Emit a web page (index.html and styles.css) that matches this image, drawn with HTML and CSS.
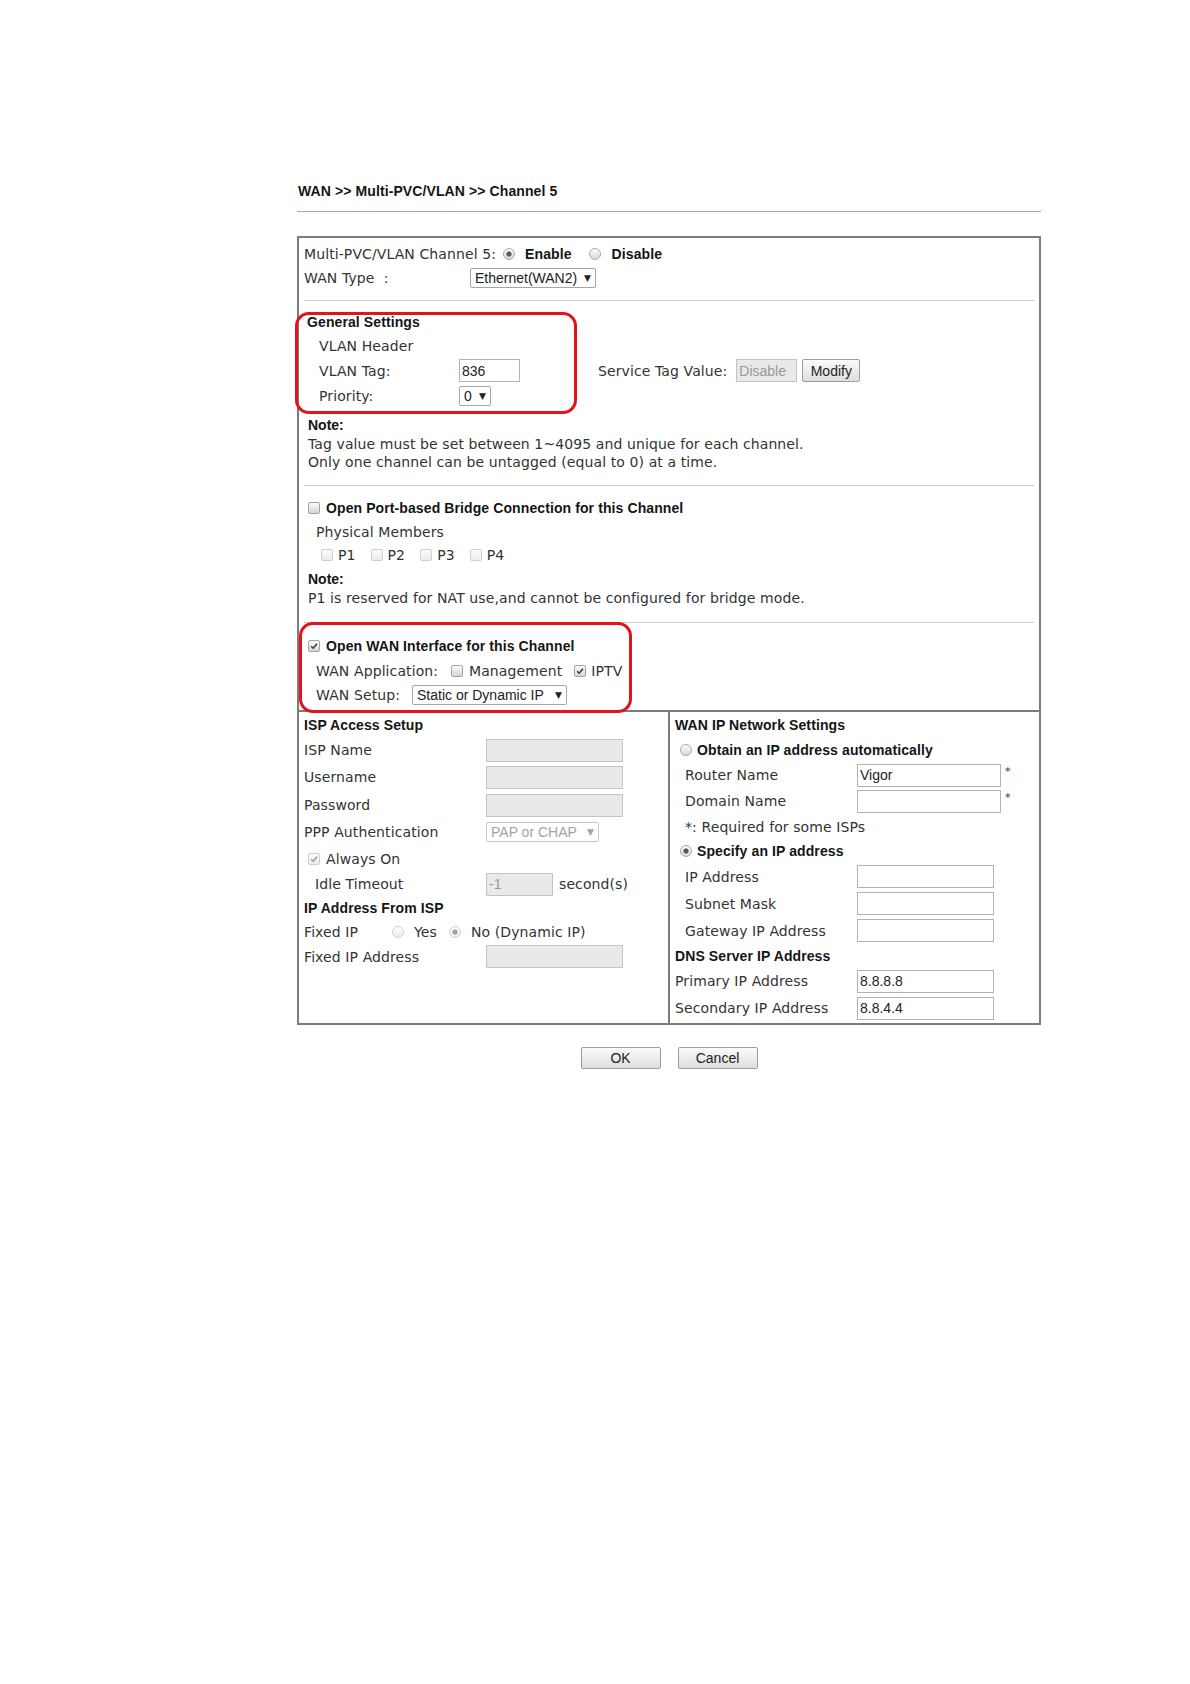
FILE: index.html
```html
<!DOCTYPE html>
<html lang="en">
<head>
<meta charset="utf-8">
<title>WAN &gt;&gt; Multi-PVC/VLAN &gt;&gt; Channel 5</title>
<link rel="stylesheet" href="styles.css">
</head>
<body>
<div class="page">
  <div class="crumb">WAN &gt;&gt; Multi-PVC/VLAN &gt;&gt; Channel 5</div>
  <div class="rule"></div>

  <div class="panel">
    <!-- channel / wan type -->
    <div class="sec sec-top">
      <div class="row h24">
        <span class="lbl">Multi-PVC/VLAN Channel 5:</span>
        <span class="radio on en-radio"></span><b class="opt en-text">Enable</b>
        <span class="radio dis-radio"></span><b class="opt dis-text">Disable</b>
      </div>
      <div class="row h24">
        <span class="lbl w-type">WAN Type&nbsp;&nbsp;:</span>
        <span class="select sel-eth"><span class="sel-text">Ethernet(WAN2)</span><span class="caret">&#9660;</span></span>
      </div>
    </div>

    <!-- general settings -->
    <div class="sec sec-general">
      <div class="gs-block">
        <div class="row h24 head gs-head">General Settings</div>
        <div class="row h24 ind15">VLAN Header</div>
        <div class="row h25 ind15">
          <span class="lbl w140">VLAN Tag:</span>
          <span class="input w61">836</span>
          <span class="lbl svc-lbl">Service Tag Value:</span>
          <span class="input disabled w61 svc-input">Disable</span>
          <span class="btn btn-modify">Modify</span>
        </div>
        <div class="row h26 ind15">
          <span class="lbl w140">Priority:</span>
          <span class="select sel-prio"><span class="sel-text">0</span><span class="caret">&#9660;</span></span>
        </div>
        <div class="mark mark-general"></div>
      </div>
      <div class="note note-general">
        <div class="note-title">Note:</div>
        <div class="note-line">Tag value must be set between 1~4095 and unique for each channel.</div>
        <div class="note-line">Only one channel can be untagged (equal to 0) at a time.</div>
      </div>
    </div>

    <!-- bridge -->
    <div class="sec sec-bridge">
      <div class="row h24 ind4">
        <span class="cb"></span><b class="head cb-text">Open Port-based Bridge Connection for this Channel</b>
      </div>
      <div class="row h23 ind12">Physical Members</div>
      <div class="row h23 ind17 ports">
        <span class="cb faint"></span><span class="port">P1</span>
        <span class="cb faint"></span><span class="port">P2</span>
        <span class="cb faint"></span><span class="port">P3</span>
        <span class="cb faint"></span><span class="port">P4</span>
      </div>
      <div class="note note-bridge">
        <div class="note-title">Note:</div>
        <div class="note-line">P1 is reserved for NAT use,and cannot be configured for bridge mode.</div>
      </div>
    </div>

    <!-- wan interface -->
    <div class="sec sec-wan">
      <div class="row h24 ind4">
        <span class="cb on"><svg viewBox="0 0 12 12"><path d="M2.6 6.3 L5 8.6 L9.6 3.2"/></svg></span><b class="head cb-text">Open WAN Interface for this Channel</b>
      </div>
      <div class="row h25 ind12">
        <span class="lbl w135">WAN Application:</span>
        <span class="cb"></span><span class="mgmt-text">Management</span>
        <span class="cb on iptv-cb"><svg viewBox="0 0 12 12"><path d="M2.6 6.3 L5 8.6 L9.6 3.2"/></svg></span><span class="iptv-text">IPTV</span>
      </div>
      <div class="row h23 ind12">
        <span class="lbl w96">WAN Setup:</span>
        <span class="select sel-setup"><span class="sel-text">Static or Dynamic IP</span><span class="caret">&#9660;</span></span>
      </div>
      <div class="mark mark-wan"></div>
    </div>

    <!-- two columns -->
    <div class="split">
      <div class="col col-left">
        <div class="row h24 head">ISP Access Setup</div>
        <div class="row h26"><span class="lbl w182">ISP Name</span><span class="input disabled w137"></span></div>
        <div class="row h28"><span class="lbl w182">Username</span><span class="input disabled w137"></span></div>
        <div class="row h28"><span class="lbl w182">Password</span><span class="input disabled w137"></span></div>
        <div class="row h26"><span class="lbl w182">PPP Authentication</span><span class="select disabled sel-ppp"><span class="sel-text">PAP or CHAP</span><span class="caret">&#9660;</span></span></div>
        <div class="row h27 ind4"><span class="cb on faint"><svg viewBox="0 0 12 12"><path d="M2.6 6.3 L5 8.6 L9.6 3.2"/></svg></span><span class="cb-text">Always On</span></div>
        <div class="row h24 ind11"><span class="lbl w171">Idle Timeout</span><span class="input disabled w67">-1</span><span class="unit">second(s)</span></div>
        <div class="row h23 head">IP Address From ISP</div>
        <div class="row h25">
          <span class="lbl w88">Fixed IP</span>
          <span class="radio faint"></span><span class="yes-text">Yes</span>
          <span class="radio on faint no-radio"></span><span class="no-text">No (Dynamic IP)</span>
        </div>
        <div class="row h25"><span class="lbl w182">Fixed IP Address</span><span class="input disabled w137"></span></div>
      </div>

      <div class="col col-right">
        <div class="row h24 head">WAN IP Network Settings</div>
        <div class="row h25 ind5"><span class="radio"></span><b class="head rad-text">Obtain an IP address automatically</b></div>
        <div class="row h26 ind10"><span class="lbl w172">Router Name</span><span class="input w144">Vigor</span><span class="star">*</span></div>
        <div class="row h26 ind10"><span class="lbl w172">Domain Name</span><span class="input w144"></span><span class="star">*</span></div>
        <div class="row h25 ind10">*: Required for some ISPs</div>
        <div class="row h24 ind5"><span class="radio on"></span><b class="head rad-text">Specify an IP address</b></div>
        <div class="row h27 ind10"><span class="lbl w172">IP Address</span><span class="input w137"></span></div>
        <div class="row h27 ind10"><span class="lbl w172">Subnet Mask</span><span class="input w137"></span></div>
        <div class="row h27 ind10"><span class="lbl w172">Gateway IP Address</span><span class="input w137"></span></div>
        <div class="row h24 head">DNS Server IP Address</div>
        <div class="row h26"><span class="lbl w182">Primary IP Address</span><span class="input w137">8.8.8.8</span></div>
        <div class="row h28"><span class="lbl w182">Secondary IP Address</span><span class="input w137">8.8.4.4</span></div>
      </div>
    </div>
  </div>

  <div class="actions">
    <span class="btn btn-main">OK</span>
    <span class="btn btn-main">Cancel</span>
  </div>
</div>
</body>
</html>
```

FILE: styles.css
```css
* { box-sizing: border-box; }

body {
  margin: 0;
  background: #ffffff;
  font-family: "DejaVu Sans", Verdana, sans-serif;
  font-size: 14px;
  letter-spacing: 0.1px;
  color: #333333;
}

.page {
  width: 744px;
  margin-left: 297px;
  padding-top: 182px;
}

.crumb {
  padding-left: 1px;
  font: bold 14px/18px "Liberation Sans", Arial, sans-serif;
  letter-spacing: 0.1px;
  color: #151515;
}

.rule {
  height: 1px;
  margin-top: 11px;
  background: #a9a9a9;
}

.panel {
  margin-top: 24px;
  border: 2px solid #7c7c7c;
}

/* sections */
.sec {
  position: relative;
  margin: 0 5px;
  border-bottom: 1px solid #cdcdcd;
}
.sec-top { padding: 4px 0 10px; }
.sec-general { padding: 9px 0 14px; }
.sec-bridge { padding: 10px 0 15px; }
.sec-wan { padding: 11px 0 4px; border-bottom: none; }

.row {
  display: flex;
  align-items: center;
  white-space: nowrap;
}
.h23 { height: 23px; }
.h24 { height: 24px; }
.h25 { height: 25px; }
.h26 { height: 26px; }
.h27 { height: 27px; }
.h28 { height: 28px; }

.ind4 { padding-left: 4px; }
.ind5 { padding-left: 5px; }
.ind10 { padding-left: 10px; }
.ind11 { padding-left: 11px; }
.ind12 { padding-left: 12px; }
.ind15 { padding-left: 15px; }
.ind17 { padding-left: 17px; }

.lbl { flex: none; }
.w-type { width: 166px; }
.w88 { width: 88px; }
.w96 { width: 96px; }
.w135 { width: 135px; }
.w140 { width: 140px; }
.w171 { width: 171px; }
.w172 { width: 172px; }
.w182 { width: 182px; }

.head, .opt {
  font-family: "Liberation Sans", Arial, sans-serif;
  font-weight: bold;
  font-size: 14px;
  letter-spacing: 0.1px;
  color: #151515;
}
.gs-head { padding-left: 3px; }

/* radio + checkbox */
.radio {
  flex: none;
  width: 12px;
  height: 12px;
  border-radius: 50%;
  border: 1px solid #a9a9a9;
  background: linear-gradient(#fbfbfb, #d9d9d9);
}
.radio.on {
  background: radial-gradient(circle, #5a5a5a 0 2.2px, rgba(90,90,90,0) 3px), linear-gradient(#fbfbfb, #d9d9d9);
}
.radio.faint {
  border-color: #d2d2d2;
  background: linear-gradient(#fdfdfd, #ececec);
}
.radio.on.faint {
  background: radial-gradient(circle, #a0a0a0 0 2.2px, rgba(160,160,160,0) 3px), linear-gradient(#fdfdfd, #ececec);
}
.en-radio { margin-left: 7px; }
.en-text { margin-left: 10px; }
.dis-radio { margin-left: 17px; }
.dis-text { margin-left: 11px; }
.rad-text { margin-left: 5px; }
.yes-text { margin-left: 10px; }
.no-radio { margin-left: 12px; }
.no-text { margin-left: 10px; }

.cb {
  flex: none;
  display: inline-flex;
  width: 12px;
  height: 12px;
  border: 1px solid #a3a3a3;
  border-radius: 2px;
  background: linear-gradient(#fafafa, #d6d6d6);
}
.cb.faint {
  border-color: #cfcfcf;
  background: linear-gradient(#fdfdfd, #ebebeb);
}
.cb svg {
  width: 10px;
  height: 10px;
}
.cb path {
  fill: none;
  stroke: #3a3a3a;
  stroke-width: 1.8;
}
.cb.faint path { stroke: #9a9a9a; }
.cb-text { margin-left: 6px; }

.ports .port { margin-left: 5px; margin-right: 15px; }
.mgmt-text { margin-left: 6px; }
.iptv-cb { margin-left: 12px; }
.iptv-text { margin-left: 5px; }

/* inputs */
.input {
  flex: none;
  display: inline-flex;
  align-items: center;
  height: 23px;
  padding: 0 2px;
  border: 1px solid #b3b3b3;
  background: #ffffff;
  font-family: "Liberation Sans", Arial, sans-serif;
  font-size: 14px;
  letter-spacing: 0;
  color: #222;
}
.input.disabled {
  background: #e9e9e9;
  border-color: #c4c4c4;
  color: #999;
}
.w61 { width: 61px; }
.w67 { width: 67px; }
.w137 { width: 137px; }
.w144 { width: 144px; }

.svc-lbl { margin-left: 78px; }
.svc-input { margin-left: 9px; }

.star {
  margin-left: 4px;
  align-self: flex-start;
  margin-top: 3px;
  font-size: 11px;
}
.unit { margin-left: 6px; }

.select {
  flex: none;
  display: inline-flex;
  align-items: center;
  justify-content: space-between;
  height: 20px;
  padding: 0 4px;
  border: 1px solid #a5a5a5;
  border-radius: 2px;
  background: #ffffff;
  font-family: "Liberation Sans", Arial, sans-serif;
  font-size: 14px;
  letter-spacing: 0;
  color: #222;
}
.select.disabled {
  border-color: #c9c9c9;
  color: #a3a3a3;
}
.caret {
  font-family: "DejaVu Sans", sans-serif;
  font-size: 9px;
  margin-left: 6px;
}
.sel-eth { width: 126px; }
.sel-prio { width: 32px; }
.sel-setup { width: 155px; }
.sel-ppp { width: 113px; }

/* buttons */
.btn {
  display: inline-flex;
  align-items: center;
  justify-content: center;
  border: 1px solid #9d9d9d;
  border-radius: 2px;
  background: linear-gradient(#fbfbfb, #dedede);
  font-family: "Liberation Sans", Arial, sans-serif;
  font-size: 14px;
  letter-spacing: 0;
  color: #222;
}
.btn-modify {
  width: 58px;
  height: 23px;
  margin-left: 5px;
}

/* notes */
.note { padding-left: 4px; }
.note-general { margin-top: 6px; }
.note-bridge { margin-top: 3px; }
.note-title {
  font-family: "Liberation Sans", Arial, sans-serif;
  font-weight: bold;
  letter-spacing: 0;
  color: #151515;
  line-height: 20px;
}
.note-line { line-height: 18px; }

/* red annotation marks */
.gs-block { position: relative; }
.mark {
  position: absolute;
  border: 3px solid #e3121b;
  border-radius: 14px;
  pointer-events: none;
}
.mark-general { top: 2px; left: -9px; width: 282px; height: 102px; }
.mark-wan { top: -1px; left: -5px; width: 333px; height: 91px; }

/* split */
.split {
  display: grid;
  grid-template-columns: 371px 1fr;
  border-top: 2px solid #7c7c7c;
}
.col-left {
  border-right: 2px solid #7c7c7c;
  padding: 1px 0 0 5px;
}
.col-right {
  padding: 1px 0 1px 5px;
}

.actions {
  display: flex;
  justify-content: center;
  gap: 17px;
  margin-top: 22px;
}
.btn-main {
  width: 80px;
  height: 22px;
}
```
